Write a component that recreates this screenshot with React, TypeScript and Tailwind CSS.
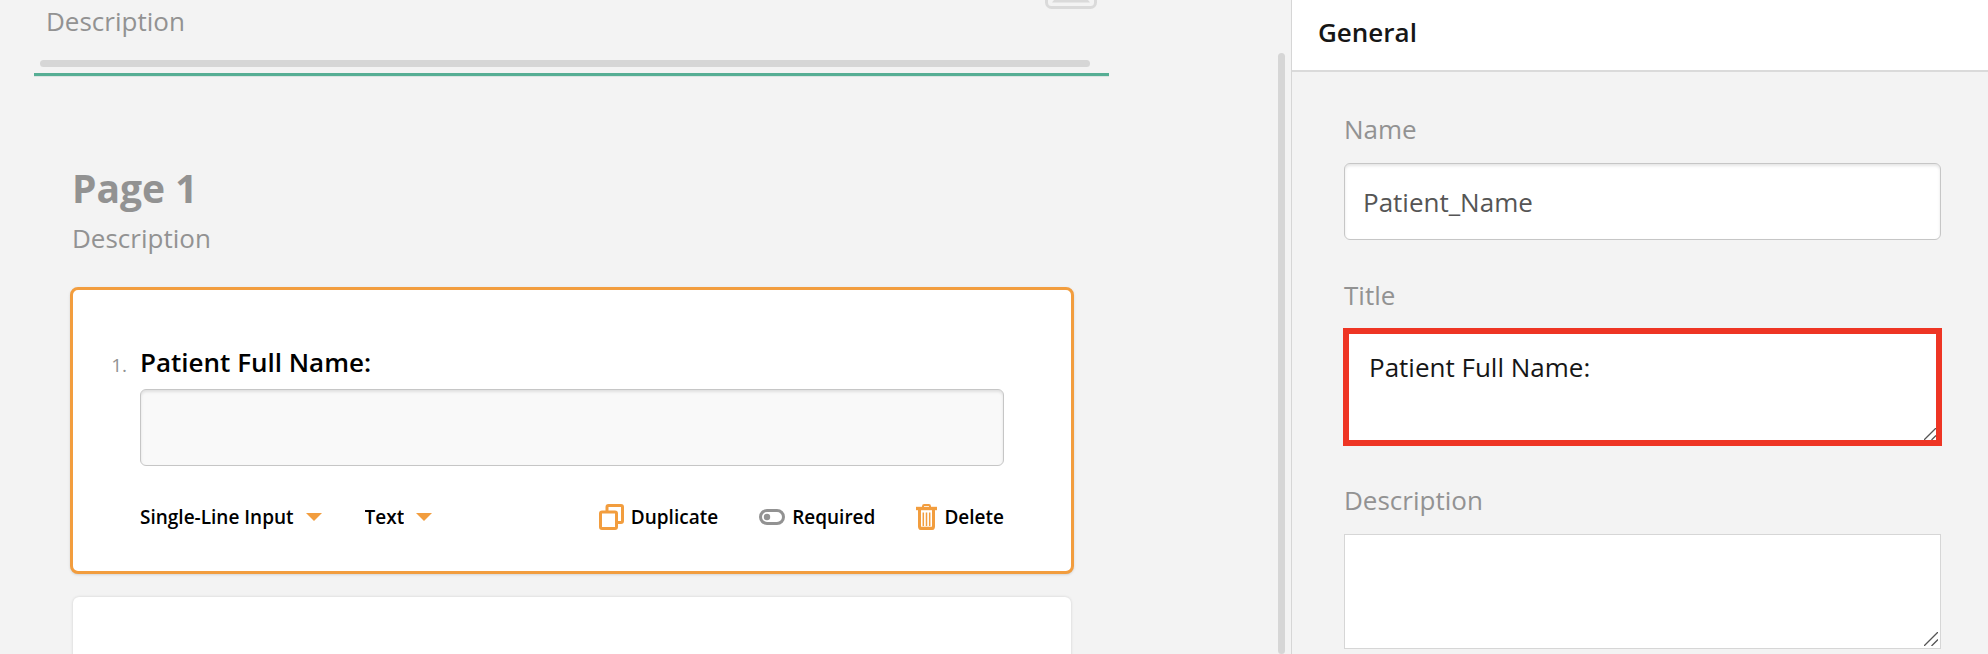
import { useState } from 'react';
import type { ReactNode } from 'react';

interface ToolSelectProps {
  label: string;
  value: string;
  options: string[];
  onChange: (value: string) => void;
}

function ToolSelect({ label, value, options, onChange }: ToolSelectProps) {
  return (
    <div className="relative flex items-center">
      <select
        aria-label={label}
        value={value}
        onChange={(e) => onChange(e.target.value)}
        className="appearance-none bg-transparent pr-7 text-[19px] leading-[26px] font-semibold text-black [field-sizing:content] focus:outline-none"
      >
        {options.map((option) => (
          <option key={option}>{option}</option>
        ))}
      </select>
      <svg viewBox="0 0 16 8" className="pointer-events-none absolute right-0 h-2 w-4 fill-[#f29d3e]">
        <path d="M0 0h16L8 8z" />
      </svg>
    </div>
  );
}

function ToolButton({ icon, children, onClick }: { icon: ReactNode; children: ReactNode; onClick?: () => void }) {
  return (
    <button type="button" onClick={onClick} className="flex items-center gap-[7px] text-[19px] leading-[26px] font-semibold text-black">
      {icon}
      {children}
    </button>
  );
}

function DuplicateIcon() {
  return (
    <svg viewBox="0 0 25 26" className="h-[26px] w-[25px]" fill="none" stroke="#f29d3e" strokeWidth="3" strokeLinejoin="round">
      <path d="M8 7V3a1.5 1.5 0 0 1 1.500-1.500H22A1.500 1.500 0 0 1 23.500 3v14A1.500 1.500 0 0 1 22 18.500h-3.500" />
      <rect x="1.5" y="8" width="16" height="16.500" rx="1.500" />
    </svg>
  );
}

function ToggleIcon({ on }: { on: boolean }) {
  return (
    <svg viewBox="0 0 26 16" className="h-4 w-[26px]">
      <rect x="1.5" y="1.5" width="23" height="13" rx="6.500" fill="none" stroke="#929292" strokeWidth="3" />
      <circle cx={on ? 18 : 8} cy="8" r="3.2" fill="#929292" />
    </svg>
  );
}

function TrashIcon() {
  return (
    <svg viewBox="0 0 21 26" className="h-[26px] w-[21px]" fill="none" stroke="#f29d3e">
      <path d="M7 4V2.200Q7 1 8.200 1h4.600Q14 1 14 2.200V4" strokeWidth="2" />
      <path d="M0 4.500h21" strokeWidth="3.400" />
      <path d="M3.500 5v17.500q0 2 2 2h10q2 0 2-2V5" strokeWidth="3" />
      <path d="M3.500 24.200h14" strokeWidth="3" />
      <path d="M7.300 8.500v13.500M10.500 8.500v13.500M13.700 8.500v13.500" strokeWidth="1.500" />
    </svg>
  );
}

function LogoPlaceholder() {
  return (
    <svg viewBox="0 0 52 9" className="h-[9px] w-[52px]">
      <path d="M1.500 0v2.500a5 5 0 0 0 5 5h39a5 5 0 0 0 5-5V0" fill="none" stroke="#dadada" strokeWidth="3" />
      <path d="M9 0h34l2 2.500H7z" fill="#dadada" />
    </svg>
  );
}

function ResizeGrip() {
  return (
    <svg viewBox="0 0 14 14" className="pointer-events-none absolute right-[3px] bottom-[3px] size-3.5" stroke="#555" strokeWidth="1.300">
      <path d="M0 14 14 0M7.500 14 14 7.500" />
    </svg>
  );
}

function Field({ id, label, children }: { id: string; label: string; children: ReactNode }) {
  return (
    <div className="flex flex-col gap-4">
      <label htmlFor={id} className="text-[26px] leading-[35px] text-[#929292]">
        {label}
      </label>
      {children}
    </div>
  );
}

export default function App() {
  const [name, setName] = useState('Patient_Name');
  const [title, setTitle] = useState('Patient Full Name:');
  const [description, setDescription] = useState('');
  const [widget, setWidget] = useState('Single-Line Input');
  const [inputType, setInputType] = useState('Text');
  const [required, setRequired] = useState(false);

  return (
    <div className="flex h-screen overflow-hidden bg-[#f3f3f3] font-['Open_Sans',sans-serif]">
      <main className="flex min-w-0 flex-1 pr-[6px]">
        <div className="min-w-0 flex-1 pl-[34px]">
          <header className="border-b-3 border-[#56ae94] pb-[6px] shadow-[0_1px_0_#dbe5e2]">
            <div className="flex items-start justify-between pr-3 pl-3">
              <p className="pt-1 text-[26px] leading-[35px] text-[#929292]">Description</p>
              <LogoPlaceholder />
            </div>
            <div className="mt-[21px] mr-[19px] ml-[6px] h-[7px] rounded-full bg-[#d6d6d6]" />
          </header>

          <section className="pt-[85px] pr-[35px] pl-9">
            <h2 className="pl-0.5 text-[39px] leading-[53px] font-bold text-[#929292]">Page 1</h2>
            <p className="mt-[7px] pl-0.5 text-[26px] leading-[35px] text-[#929292]">Description</p>

            <article className="mt-[31px] rounded-lg border-3 border-[#f29d3e] bg-white pt-[55px] pr-[67px] pb-[41px] shadow-sm">
              <div className="flex items-baseline">
                <span className="w-[67px] shrink-0 pr-[13px] text-right text-[19px] leading-[26px] text-[#929292]">1.</span>
                <label htmlFor="answer" className="text-[26px] leading-[35px] font-semibold text-black">
                  {title}
                </label>
              </div>
              <div className="pl-[67px]">
                <input
                  id="answer"
                  type="text"
                  readOnly
                  className="mt-[9px] block h-[77px] w-full rounded-md border border-[#c6c6c6] bg-[#f9f9f9] px-[18px] shadow-[inset_0_2px_3px_rgba(0,0,0,0.1)] focus:outline-none"
                />
                <div className="mt-[38px] flex items-center justify-between">
                  <div className="flex items-center gap-[43px]">
                    <ToolSelect
                      label="Question type"
                      value={widget}
                      options={['Single-Line Input', 'Comment', 'Dropdown']}
                      onChange={setWidget}
                    />
                    <ToolSelect label="Input type" value={inputType} options={['Text', 'Number', 'Date']} onChange={setInputType} />
                  </div>
                  <div className="flex items-center gap-[41px]">
                    <ToolButton icon={<DuplicateIcon />}>Duplicate</ToolButton>
                    <ToolButton icon={<ToggleIcon on={required} />} onClick={() => setRequired(!required)}>
                      Required
                    </ToolButton>
                    <ToolButton icon={<TrashIcon />}>Delete</ToolButton>
                  </div>
                </div>
              </div>
            </article>

            <article className="mx-[3px] mt-[23px] h-72 rounded-md bg-white shadow-[0_0_3px_rgba(0,0,0,0.15)]" />
          </section>
        </div>
        {/* scrollbar */}
        <div aria-hidden="true" className="w-44 shrink-0 pt-[53px]">
          <div className="ml-auto h-full w-[7px] rounded-full bg-[#d6d6d6]" />
        </div>
      </main>

      <aside className="w-[697px] shrink-0 border-l border-[#d6d6d6]">
        <h2 className="border-b-2 border-[#dadada] bg-white pt-[15px] pb-5 pl-[26px] text-[26px] leading-[35px] font-semibold text-[#161616]">
          General
        </h2>
        <form className="flex flex-col gap-[38px] pt-10 pr-[47px] pl-[52px]">
          <Field id="name" label="Name">
            <input
              id="name"
              type="text"
              value={name}
              onChange={(e) => setName(e.target.value)}
              className="h-[77px] w-full rounded-md border border-[#c6c6c6] bg-white px-[18px] text-[26px] text-[#555] shadow-[inset_0_2px_3px_rgba(0,0,0,0.1)] focus:outline-none"
            />
          </Field>
          <Field id="title" label="Title">
            <div className="relative">
              <textarea
                id="title"
                value={title}
                onChange={(e) => setTitle(e.target.value)}
                className="block h-[116px] w-full resize-none border border-[#d6d6d6] bg-white px-6 py-5 text-[26px] leading-[35px] text-[#161616] outline-6 -outline-offset-5 outline-[#ee3524]"
              />
              <svg viewBox="0 0 12 12" className="pointer-events-none absolute right-[5px] bottom-[5px] size-3" stroke="#555" strokeWidth="1.300">
                <path d="M0 12 12 0M7.500 12 12 7.500" />
              </svg>
            </div>
          </Field>
          <Field id="description" label="Description">
            <div className="relative">
              <textarea
                id="description"
                value={description}
                onChange={(e) => setDescription(e.target.value)}
                className="block h-[115px] w-full resize-none border border-[#d6d6d6] bg-white px-6 py-5 text-[26px] leading-[35px] text-[#161616] focus:outline-none"
              />
              <ResizeGrip />
            </div>
          </Field>
        </form>
      </aside>
    </div>
  );
}
